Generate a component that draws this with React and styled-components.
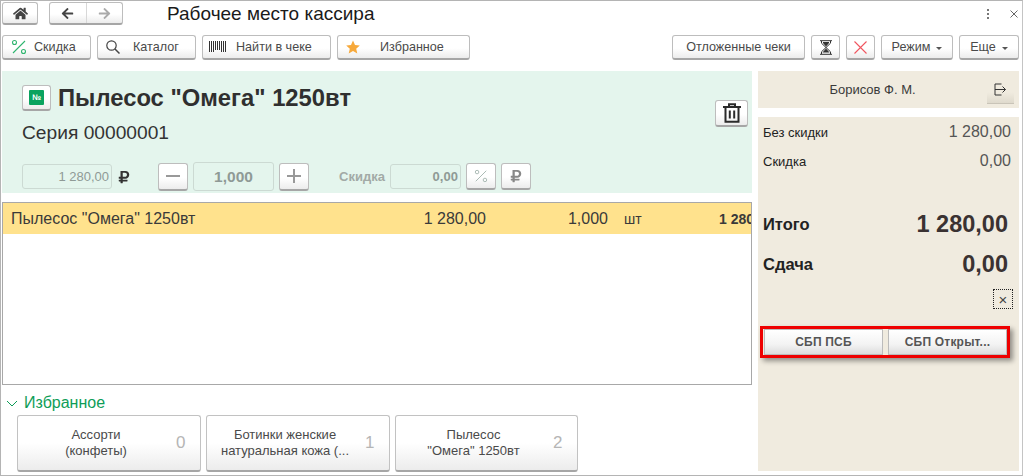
import styled, { createGlobalStyle } from 'styled-components';
import { FaHome, FaArrowLeft, FaArrowRight, FaRubleSign } from 'react-icons/fa';

const Global = createGlobalStyle`
  html, body { margin: 0; padding: 0; background: #fff; }
  body { font-family: "Liberation Sans", Arial, sans-serif; color: #333; font-size: 12px; }
`;

const Percent = ({ color = '#2fb56f', size = 16 }) => (
  <svg width={size} height={size} viewBox="0 0 16 16" fill="none" stroke={color} strokeWidth="1.1">
    <circle cx="3.5" cy="3.5" r="2" />
    <circle cx="12.5" cy="12.5" r="2" />
    <path d="M14 2 L2 14" />
  </svg>
);

const Loupe = () => (
  <svg width="14" height="14" viewBox="0 0 14 14" fill="none" stroke="#444" strokeWidth="1.2">
    <circle cx="5.5" cy="5.5" r="4.7" />
    <path d="M9 9L13.5 13.5" strokeWidth="1.5" />
  </svg>
);

const Star = () => (
  <svg width="14" height="14" viewBox="0 0 14 14" fill="#f7a93b">
    <path d="M7 .5L9 5.1L13.8 5.5L10.2 8.7L11.3 13.5L7 11L2.7 13.5L3.8 8.7L.2 5.5L5 5.1Z" />
  </svg>
);

const Barcode = () => (
  <svg width="17" height="12" viewBox="0 0 17 12" stroke="#333" fill="none">
    <path d="M.5 0V11M2.5 0V11M4.5 0V11M6.5 0V9M8.5 0V9M10.5 0V9M12.5 0V11M14.5 0V11M16.5 0V11" />
  </svg>
);

const Hourglass = () => (
  <svg width="12" height="15" viewBox="0 0 12 15" fill="none" stroke="#333">
    <path d="M0 .7H12M0 14.3H12M1.5 1V3.2L10.5 11.8V14M10.5 1V3.2L1.5 11.8V14" />
    <path d="M3 2H9V3L6 6.5L3 3ZM6 8.5L9.5 12.5H2.5Z" fill="#333" stroke="none" />
  </svg>
);

const Cross = () => (
  <svg width="13" height="13" viewBox="0 0 13 13" stroke="#f0555f" strokeWidth="1.1">
    <path d="M.5 .5L12.5 12.5M12.5 .5L.5 12.5" />
  </svg>
);

const Exit = () => (
  <svg width="13" height="13" viewBox="0 0 13 13" fill="none" stroke="#333">
    <path d="M7.5 1H1V12H7.5M1 6.5H11.5M8.5 3.5L11.5 6.5L8.5 9.5" />
  </svg>
);

const Trash = () => (
  <svg width="18" height="20" viewBox="0 0 18 20" fill="none" stroke="#2b2b2b" strokeWidth="2">
    <path d="M0 4H18M6 4V1.2H12V4M2.5 4V18.8H15.5V4" />
    <path d="M6.8 7.5V15.5M11.2 7.5V15.5" />
  </svg>
);

const Window = styled.div`
  box-sizing: border-box;
  width: 1023px;
  height: 476px;
  border: 1px solid #b4b4b4;
  border-right-color: #c4c4c4;
  padding: 1px 3px 0 0;
  overflow: hidden;
  display: flex;
  flex-direction: column;
`;

const TopBar = styled.div`
  display: flex;
  align-items: center;
  height: 23px;
`;

const Title = styled.div`
  font-size: 19px;
  color: #1a1a1a;
  margin-left: 44px;
  flex: 1;
`;

const Btn = styled.div`
  box-sizing: border-box;
  display: flex;
  align-items: center;
  justify-content: ${p => p.$justify || 'center'};
  flex: none;
  width: ${p => p.$w}px;
  height: ${p => p.$h || 25}px;
  margin-left: ${p => p.$ml ?? 6}px;
  padding: ${p => p.$pad || 0};
  gap: ${p => p.$gap || 0}px;
  border: 1px solid #bdbdbd;
  border-bottom: 2px solid #a6a6a6;
  border-radius: 3px;
  background: linear-gradient(#fff 55%, #ececec);
  color: ${p => p.$color || '#4a4a4a'};
  font-size: 12.6px;
  white-space: nowrap;
`;

const NavGroup = styled.div`
  box-sizing: border-box;
  display: flex;
  width: 74px;
  height: 23px;
  margin-left: 11px;
  border: 1px solid #bdbdbd;
  border-bottom: 2px solid #a6a6a6;
  border-radius: 3px;
  background: linear-gradient(#fff 55%, #ececec);
`;

const NavCell = styled.div`
  flex: 1;
  display: flex;
  align-items: center;
  justify-content: center;
  color: ${p => (p.$muted ? '#aaa' : '#444')};
  & + & { border-left: 1px solid #d8d8d8; }
`;

const WinActions = styled.div`
  display: flex;
  align-items: center;
  gap: 21px;
  padding-right: 1px;
`;

const Dots = styled.div`
  display: flex;
  flex-direction: column;
  gap: 2px;
  i { width: 2px; height: 2px; background: #777; display: block; }
`;

const Toolbar = styled.div`
  display: flex;
  align-items: flex-start;
  height: 36px;
  margin-top: 10px;
`;

const Spacer = styled.div`
  flex: 1;
`;

const Caret = styled.span`
  display: inline-block;
  margin-left: 6px;
  margin-top: 2px;
  border-left: 3px solid transparent;
  border-right: 3px solid transparent;
  border-top: 3px solid #555;
`;

const Body = styled.div`
  display: grid;
  grid-template-columns: 751px 261px;
  column-gap: 6px;
  flex: 1;
  min-height: 0;
`;

const LeftCol = styled.div`
  display: flex;
  flex-direction: column;
  min-width: 0;
`;

const ItemCard = styled.div`
  box-sizing: border-box;
  height: 122px;
  background: #e4f5ed;
  margin-left: 1px;
  padding: 13px 4px 0 20px;
  display: flex;
  flex-direction: column;
`;

const NameRow = styled.div`
  display: flex;
  align-items: center;
  height: 27px;
  gap: 7px;
`;

const NoBadge = styled.span`
  display: flex;
  align-items: center;
  justify-content: center;
  width: 15px;
  height: 15px;
  background: #0aa35f;
  border-radius: 1px;
  color: #fff;
  font-size: 8px;
  font-weight: 700;
`;

const ItemName = styled.div`
  font-size: 23.8px;
  font-weight: 700;
  color: #2f2f2f;
`;

const SerialRow = styled.div`
  display: flex;
  justify-content: space-between;
  align-items: flex-start;
  height: 53px;
`;

const Serial = styled.div`
  font-size: 19.2px;
  color: #333;
  margin-top: 11px;
`;

const TrashBtn = styled(Btn)`
  margin: -11px 0 0 0;
`;

const QtyRow = styled.div`
  display: flex;
  align-items: center;
  height: 29px;
  margin-top: -2px;
`;

const Field = styled.div`
  box-sizing: border-box;
  width: ${p => p.$w}px;
  height: ${p => p.$h || 25}px;
  margin-left: ${p => p.$ml || 0}px;
  border: 1px solid #ccdad3;
  border-radius: 3px;
  display: flex;
  align-items: center;
  justify-content: ${p => (p.$center ? 'center' : 'flex-end')};
  padding: 0 2px;
  color: ${p => p.$color || '#8f9a96'};
  font-size: ${p => p.$size || 13}px;
  font-weight: ${p => (p.$bold ? 700 : 400)};
`;

const Ruble = styled.span`
  display: flex;
  margin-left: 5px;
  width: 41px;
  color: #333;
`;

const DiscountLabel = styled.span`
  margin-left: 30px;
  font-weight: 700;
  font-size: 13px;
  color: #a2aaa6;
`;

const Table = styled.div`
  box-sizing: border-box;
  height: 183px;
  margin: 9px 0 0 1px;
  border: 1px solid #a8a8a8;
  background: #fff;
`;

const Row = styled.div`
  display: grid;
  grid-template-columns: 390px 93px 122px 111px minmax(0, 1fr);
  align-items: center;
  height: 31px;
  background: #ffe28d;
  overflow: hidden;
  color: #3a3a3a;
  white-space: nowrap;
`;

const Cell = styled.div`
  text-align: ${p => p.$align || 'left'};
  padding-left: ${p => p.$pl || 0}px;
  font-weight: ${p => (p.$bold ? 700 : 400)};
  font-size: ${p => p.$size || 16}px;
  overflow: hidden;
`;

const FavHeader = styled.div`
  display: flex;
  align-items: center;
  gap: 6px;
  height: 20px;
  margin: 8px 0 0 5px;
  color: #0e9d58;
  font-size: 16px;
`;

const FavRow = styled.div`
  display: flex;
  gap: 5px;
  margin: 2px 0 0 16px;
`;

const FavBtn = styled.div`
  box-sizing: border-box;
  flex: none;
  width: ${p => p.$w || 184}px;
  height: 57px;
  display: flex;
  align-items: center;
  border: 1px solid #c2c2c2;
  border-bottom: 2px solid #a6a6a6;
  border-radius: 3px;
  background: linear-gradient(#fff 50%, #ececec);
`;

const FavLabel = styled.div`
  flex: 1;
  text-align: center;
  font-size: 13px;
  line-height: 16px;
  color: #4a4a4a;
  padding-right: 2px;
  white-space: nowrap;
`;

const FavNum = styled.div`
  width: 24px;
  font-size: 17px;
  color: #b5b5b5;
`;

const RightCol = styled.div`
  display: flex;
  flex-direction: column;
  gap: 9px;
`;

const UserBar = styled.div`
  box-sizing: border-box;
  height: 37px;
  background: #f0ebdf;
  display: flex;
  align-items: center;
  padding-right: 5px;
`;

const UserName = styled.div`
  flex: 1;
  text-align: center;
  font-size: 13px;
  color: #3a3a3a;
`;

const ExitBtn = styled.div`
  width: 27px;
  height: 27px;
  display: flex;
  align-items: center;
  justify-content: center;
  background: linear-gradient(#f0ebdf 60%, #dfdacd);
  border-bottom: 1px solid #c9c4b8;
`;

const Totals = styled.div`
  box-sizing: border-box;
  height: 354px;
  background: #f0ebdf;
  padding: 6px 8px 0 5px;
  display: flex;
  flex-direction: column;
`;

const SumRow = styled.div`
  display: flex;
  justify-content: space-between;
  align-items: center;
  height: ${p => p.$h}px;
  margin-top: ${p => p.$mt || 0}px;
  padding-right: ${p => p.$pr || 0}px;
`;

const SumLabel = styled.span`
  font-size: ${p => (p.$big ? 16.5 : 13)}px;
  font-weight: ${p => (p.$big ? 700 : 400)};
  color: #222;
`;

const SumValue = styled.span`
  font-size: ${p => (p.$big ? 23.5 : 16)}px;
  font-weight: ${p => (p.$big ? 700 : 400)};
  color: ${p => (p.$big ? '#3a3232' : '#555')};
`;

const CloseWrap = styled.div`
  display: flex;
  justify-content: flex-end;
  margin: 10px -2px 0 0;
`;

const CloseBtn = styled.div`
  box-sizing: border-box;
  width: 20px;
  height: 20px;
  border: 1px dotted #222;
  display: flex;
  align-items: center;
  justify-content: center;
  font-size: 15px;
  line-height: 1;
  color: #444;
`;

const SbpOutline = styled.div`
  box-sizing: border-box;
  display: flex;
  gap: 5px;
  width: 250px;
  height: 32px;
  margin: 17px 0 0 -3px;
  border: 3px solid #ee0000;
  padding: 0 0 0 1px;
  box-shadow: 3px 3px 5px rgba(0, 0, 0, 0.4);
`;

const SbpBtn = styled.div`
  box-sizing: border-box;
  flex: 1;
  display: flex;
  align-items: center;
  justify-content: center;
  font-size: 12px;
  font-weight: 700;
  color: #555;
  border: 1px solid #bbb;
  background: linear-gradient(#fff, #f3f3f3 60%, #ddd);
  letter-spacing: 0.2px;
`;

const favs = [
  { lines: ['Ассорти', '(конфеты)'], num: 0 },
  { lines: ['Ботинки женские', 'натуральная кожа (...'], num: 1 },
  { lines: ['Пылесос', '"Омега" 1250вт'], num: 2, w: 183 },
];

export default function App() {
  return (
    <>
      <Global />
      <Window>
        <TopBar>
          <Btn $w={36} $h={23} $ml={1}><FaHome size={15} color="#444" /></Btn>
          <NavGroup>
            <NavCell><FaArrowLeft size={13} /></NavCell>
            <NavCell $muted><FaArrowRight size={13} /></NavCell>
          </NavGroup>
          <Title>Рабочее место кассира</Title>
          <WinActions>
            <Dots><i /><i /><i /></Dots>
            <svg width="8" height="8" viewBox="0 0 8 8" stroke="#666"><path d="M.5 .5L7.5 7.5M7.5 .5L.5 7.5" /></svg>
          </WinActions>
        </TopBar>
        <Toolbar>
          <Btn $w={89} $ml={1} $justify="flex-start" $pad="0 0 0 8px" $gap={7}><Percent />Скидка</Btn>
          <Btn $w={99} $justify="flex-start" $pad="0 0 0 8px" $gap={13}><Loupe />Каталог</Btn>
          <Btn $w={129} $justify="flex-start" $pad="0 0 0 6px" $gap={10}><Barcode />Найти в чеке</Btn>
          <Btn $w={133} $justify="flex-start" $pad="0 0 0 8px" $gap={20}><Star />Избранное</Btn>
          <Spacer />
          <Btn $w={133}>Отложенные чеки</Btn>
          <Btn $w={29}><Hourglass /></Btn>
          <Btn $w={29}><Cross /></Btn>
          <Btn $w={72}>Режим<Caret /></Btn>
          <Btn $w={60}>Еще<Caret /></Btn>
        </Toolbar>
        <Body>
          <LeftCol>
            <ItemCard>
              <NameRow>
                <Btn $w={29} $h={26} $ml={0}><NoBadge>№</NoBadge></Btn>
                <ItemName>Пылесос "Омега" 1250вт</ItemName>
              </NameRow>
              <SerialRow>
                <Serial>Серия 00000001</Serial>
                <TrashBtn $w={33} $h={27}><Trash /></TrashBtn>
              </SerialRow>
              <QtyRow>
                <Field $w={90}>1 280,00</Field>
                <Ruble><FaRubleSign size={14} /></Ruble>
                <Btn $w={30} $h={28} $ml={0} $color="#888"><svg width="14" height="2"><rect width="14" height="2" fill="#999" /></svg></Btn>
                <Field $w={81} $h={29} $ml={5} $center $bold $size={15.5}>1,000</Field>
                <Btn $w={30} $h={28} $ml={5}><svg width="14" height="14" stroke="#999" strokeWidth="2"><path d="M7 0V14M0 7H14" /></svg></Btn>
                <DiscountLabel>Скидка</DiscountLabel>
                <Field $w={71} $ml={5} $bold>0,00</Field>
                <Btn $w={30} $h={27} $ml={5}><Percent color="#a8b8b2" size={14} /></Btn>
                <Btn $w={30} $h={27} $ml={5}><FaRubleSign size={14} color="#888" /></Btn>
              </QtyRow>
            </ItemCard>
            <Table>
              <Row>
                <Cell $pl={8}>Пылесос "Омега" 1250вт</Cell>
                <Cell $align="right">1 280,00</Cell>
                <Cell $align="right">1,000</Cell>
                <Cell $pl={16} $size={14}>шт</Cell>
                <Cell $bold $size={14}>1 280,00</Cell>
              </Row>
            </Table>
            <FavHeader>
              <svg width="12" height="7" viewBox="0 0 12 7" fill="none" stroke="#0e9d58"><path d="M1 1L6 6L11 1" /></svg>
              Избранное
            </FavHeader>
            <FavRow>
              {favs.map(f => (
                <FavBtn key={f.num} $w={f.w}>
                  <FavLabel>{f.lines[0]}<br />{f.lines[1]}</FavLabel>
                  <FavNum>{f.num}</FavNum>
                </FavBtn>
              ))}
            </FavRow>
          </LeftCol>
          <RightCol>
            <UserBar>
              <UserName>Борисов Ф. М.</UserName>
              <ExitBtn><Exit /></ExitBtn>
            </UserBar>
            <Totals>
              <SumRow $h={18}><SumLabel>Без скидки</SumLabel><SumValue>1 280,00</SumValue></SumRow>
              <SumRow $h={18} $mt={11}><SumLabel>Скидка</SumLabel><SumValue>0,00</SumValue></SumRow>
              <SumRow $h={30} $mt={39} $pr={3}><SumLabel $big>Итого</SumLabel><SumValue $big>1 280,00</SumValue></SumRow>
              <SumRow $h={30} $mt={10} $pr={3}><SumLabel $big>Сдача</SumLabel><SumValue $big>0,00</SumValue></SumRow>
              <CloseWrap><CloseBtn>×</CloseBtn></CloseWrap>
              <SbpOutline>
                <SbpBtn>СБП ПСБ</SbpBtn>
                <SbpBtn>СБП Открыт...</SbpBtn>
              </SbpOutline>
            </Totals>
          </RightCol>
        </Body>
      </Window>
    </>
  );
}
